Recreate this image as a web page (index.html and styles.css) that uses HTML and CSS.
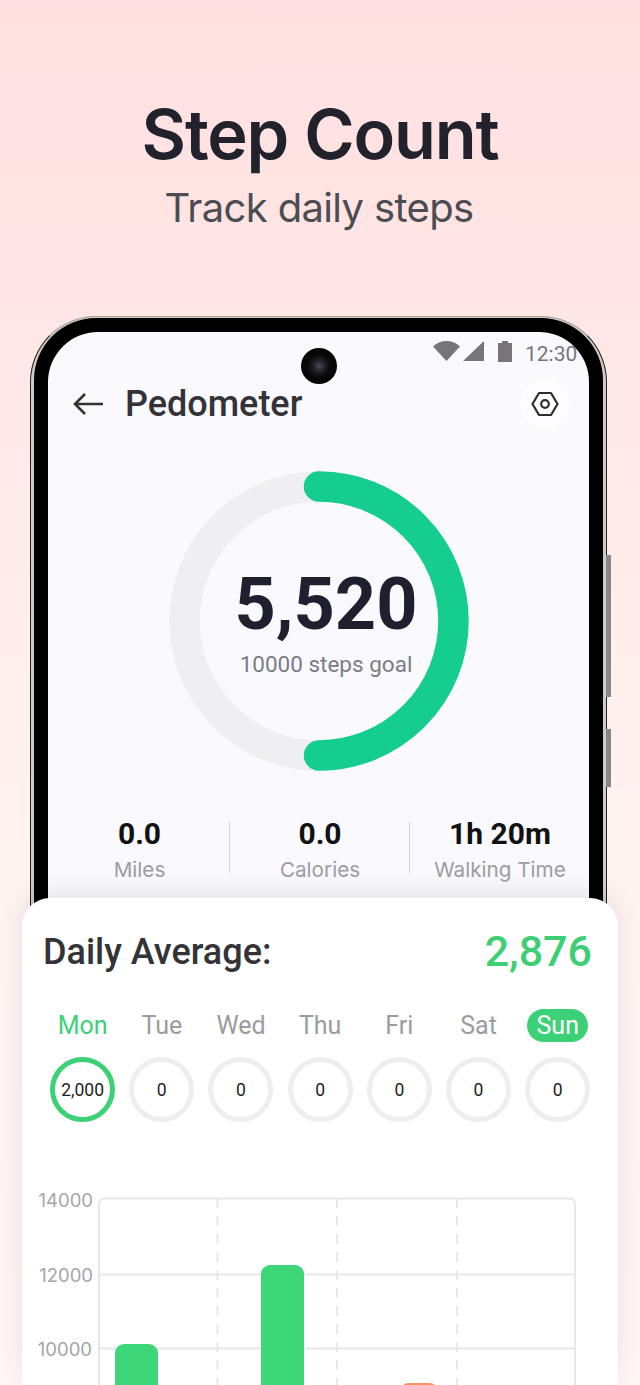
FILE: index.html
```html
<!DOCTYPE html>
<html lang="en">
  <head>
    <meta charset="UTF-8" />
    <title>Step Count</title>
    <link rel="stylesheet" href="styles.css">
  </head>
  <body>
    <header class="promo">
      <h1>Step Count</h1>
      <p>Track daily steps</p>
    </header>

    <div class="phone">
      <span class="side-btn power"></span>
      <span class="side-btn volume"></span>
      <div class="bezel">
        <div class="screen">
          <span class="camera"></span>
          <div class="status">
            <svg width="27" height="20" viewBox="0 0 27 20"><path d="M0 5.500C3.500 2 8 0 13.500 0S23.500 2 27 5.500L13.500 20Z" fill="#77757a"/></svg>
            <svg class="signal" width="21" height="20" viewBox="0 0 21 20"><path d="M21 0V20H0Z" fill="#77757a"/></svg>
            <svg class="battery" width="14" height="21" viewBox="0 0 14 21"><path d="M4 0H10V2H14V21H0V2H4Z" fill="#77757a"/></svg>
            <span class="time">12:30</span>
          </div>
          <div class="appbar">
            <svg width="30" height="24" viewBox="0 0 30 24" fill="none" stroke="#333" stroke-width="2.600"><path d="M30 12H2M12 2 2 12l10 10"/></svg>
            <h2>Pedometer</h2>
            <div class="settings">
              <svg width="28" height="26" viewBox="0 0 28 26" fill="none" stroke="#2d2d33" stroke-width="2.200"><path d="M8 2H20L26.500 13 20 24H8L1.500 13Z" stroke-linejoin="round"/><circle cx="14" cy="13" r="3.800"/></svg>
            </div>
          </div>
          <div class="ring">
            <svg width="300" height="300" viewBox="0 0 300 300" fill="none" stroke-width="30.500">
              <circle cx="150" cy="150" r="134.500" stroke="#efeff1"/>
              <path d="M150 15.500A134.500 134.500 0 0 1 150 284.500" stroke="#14cd8e" stroke-linecap="round"/>
            </svg>
            <div class="ring-text">
              <strong>5,520</strong>
              <span>10000 steps goal</span>
            </div>
          </div>
          <div class="stats">
            <div class="stat"><b>0.0</b><span>Miles</span></div>
            <div class="stat"><b>0.0</b><span>Calories</span></div>
            <div class="stat"><b>1h 20m</b><span>Walking Time</span></div>
          </div>
        </div>
      </div>
    </div>

    <section class="card">
      <div class="card-head">
        <h3>Daily Average:</h3>
        <span class="average">2,876</span>
      </div>
      <div class="days">
        <div class="day done"><span class="day-name">Mon</span><span class="day-ring">2,000</span></div>
        <div class="day"><span class="day-name">Tue</span><span class="day-ring">0</span></div>
        <div class="day"><span class="day-name">Wed</span><span class="day-ring">0</span></div>
        <div class="day"><span class="day-name">Thu</span><span class="day-ring">0</span></div>
        <div class="day"><span class="day-name">Fri</span><span class="day-ring">0</span></div>
        <div class="day"><span class="day-name">Sat</span><span class="day-ring">0</span></div>
        <div class="day today"><span class="day-name">Sun</span><span class="day-ring">0</span></div>
      </div>
      <svg class="chart" width="596" height="187" viewBox="0 0 596 187">
        <g class="grid-dash">
          <path d="M195.500 0V187M315 0V187M435 0V187"/>
        </g>
        <g class="grid-line">
          <path d="M77 76.500H553M77 150.500H553"/>
          <path d="M77 187V6Q77 0.500 83 0.500H547Q553 0.500 553 6V187"/>
        </g>
        <g class="axis">
          <text x="71" y="9">14000</text>
          <text x="71" y="84">12000</text>
          <text x="70" y="158">10000</text>
        </g>
        <path class="bar" d="M93 187V155a9 9 0 0 1 9-9H127a9 9 0 0 1 9 9V187Z"/>
        <path class="bar" d="M239 187V76a9 9 0 0 1 9-9H273a9 9 0 0 1 9 9V187Z"/>
        <path class="bar-low" d="M381 187Q383 185 387 185H407Q411 185 413 187Z"/>
      </svg>
    </section>
  </body>
</html>
```

FILE: styles.css
```css
* {
  box-sizing: border-box;
}

html,
body {
  margin: 0;
  height: 1385px;
  overflow: hidden;
}

body {
  background: linear-gradient(#ffe0e0, #ffe6e4 300px, #fff3f1 850px, #fff6f5);
  font-family: Roboto, sans-serif;
}

.promo {
  height: 316px;
  padding-top: 95px;
  text-align: center;
  font-family: Inter, sans-serif;
}

.promo h1 {
  margin: 0;
  font-size: 68.500px;
  font-weight: 600;
  line-height: 80px;
  letter-spacing: -1.200px;
  color: #22222c;
}

.promo p {
  margin: 8px 2px 0 0;
  font-size: 40px;
  line-height: 50px;
  letter-spacing: -0.650px;
  color: #4c4c52;
}

.phone {
  position: relative;
  width: 577px;
  height: 620px;
  margin: 0 0 -38px 30px;
  padding: 1px 3px 0;
  background: #cfcbc4;
  border: 1px solid #222;
  border-top-color: #a8a29a;
  border-bottom: 0;
  border-radius: 66px 66px 0 0;
}

.side-btn {
  position: absolute;
  right: -5px;
  width: 5px;
  background: #86868a;
}

.power {
  top: 238px;
  height: 142px;
}

.volume {
  top: 412px;
  height: 58px;
}

.bezel {
  height: 100%;
  padding: 14px 14px 0;
  background: #000;
  border-radius: 62px 62px 0 0;
}

.screen {
  position: relative;
  height: 100%;
  padding-top: 9px;
  background: #f9f9fe;
  border-radius: 50px 50px 0 0;
}

.camera {
  position: absolute;
  top: 16px;
  left: 253px;
  width: 36px;
  height: 36px;
  border-radius: 50%;
  background: radial-gradient(circle, #4c4c56 0, #24242a 20%, #08080a 45%, #000 100%);
}

.status {
  display: flex;
  align-items: flex-start;
  height: 20px;
  padding-left: 385px;
}

.signal {
  margin-left: 3px;
}

.battery {
  margin-left: 14px;
}

.time {
  margin-left: 13px;
  font-size: 21px;
  line-height: 26px;
  color: #77757a;
}

.appbar {
  display: flex;
  align-items: center;
  height: 50px;
  margin-top: 18px;
  padding: 0 19px 0 25px;
}

.appbar h2 {
  flex: 1;
  margin: 0 0 0 22px;
  font-size: 36px;
  font-weight: 500;
  color: #333338;
}

.settings {
  display: flex;
  align-items: center;
  justify-content: center;
  width: 50px;
  height: 50px;
  border-radius: 50%;
  background: rgba(255, 255, 255, 0.6);
}

.ring {
  position: relative;
  width: 300px;
  height: 300px;
  margin: 42px auto 0 121px;
}

.ring svg {
  display: block;
}

.ring-text {
  position: absolute;
  top: 0;
  left: 0;
  display: flex;
  flex-direction: column;
  align-items: center;
  width: 100%;
  padding-top: 93px;
  margin-left: 7px;
}

.ring-text strong {
  font-size: 72px;
  font-weight: 700;
  line-height: 82px;
  color: #1f1f2e;
}

.ring-text span {
  font-size: 22.500px;
  line-height: 26px;
  margin-top: 5px;
  color: #7c7c85;
}

.stats {
  display: grid;
  grid-template-columns: 181px 180px 180px;
  margin-top: 51px;
}

.stat {
  display: flex;
  flex-direction: column;
  align-items: center;
  height: 51px;
  padding-left: 1px;
  border-left: 1.500px solid #d5d5d9;
}

.stat:first-child {
  padding-left: 2px;
  border-left: 0;
}

.stat b {
  font-size: 30px;
  font-weight: 700;
  line-height: 36px;
  margin-top: -6px;
  color: #111;
}

.stat span {
  margin-top: 6px;
  font-family: Inter, sans-serif;
  font-size: 20.700px;
  line-height: 24px;
  color: #9d9da2;
}

.card {
  position: relative;
  width: 596px;
  height: 487px;
  margin-left: 22px;
  padding-top: 29px;
  background: #fff;
  border-radius: 28px 28px 0 0;
  box-shadow: 0 -6px 26px rgba(0, 0, 0, 0.09);
}

.card-head {
  display: flex;
  align-items: center;
  justify-content: space-between;
  height: 50px;
  margin: 0 26px 0 21px;
}

.card-head h3 {
  margin: 0;
  font-size: 36px;
  font-weight: 500;
  color: #333338;
}

.average {
  margin-top: -2px;
  font-size: 43px;
  font-weight: 500;
  color: #3ecf76;
}

.days {
  display: grid;
  grid-template-columns: repeat(7, 79.200px);
  padding: 32px 0 0 21px;
}

.day {
  display: flex;
  flex-direction: column;
  align-items: center;
  gap: 15px;
}

.day-name {
  padding: 0 9.500px;
  font-size: 25px;
  line-height: 33px;
  border-radius: 17px;
  color: #9c9c9f;
}

.day-ring {
  display: flex;
  align-items: center;
  justify-content: center;
  width: 65px;
  height: 65px;
  font-size: 17.500px;
  color: #222;
  border: 5.500px solid #eeeeef;
  border-radius: 50%;
}

.done .day-name {
  color: #3dd177;
}

.done .day-ring {
  border-color: #3dd177;
}

.today .day-name {
  color: #fff;
  background: #3dd177;
}

.chart {
  display: block;
  margin-top: 76px;
  overflow: visible;
}

.grid-line path {
  fill: none;
  stroke: #e8e8ea;
  stroke-width: 2;
}

.grid-dash path {
  fill: none;
  stroke: #e8e8ea;
  stroke-width: 2;
  stroke-dasharray: 10 8;
}

.axis text {
  font-family: Inter, sans-serif;
  font-size: 18.500px;
  fill: #a5a5a8;
  text-anchor: end;
}

.bar {
  fill: #3dd678;
}

.bar-low {
  fill: #ff8f5e;
}
```
